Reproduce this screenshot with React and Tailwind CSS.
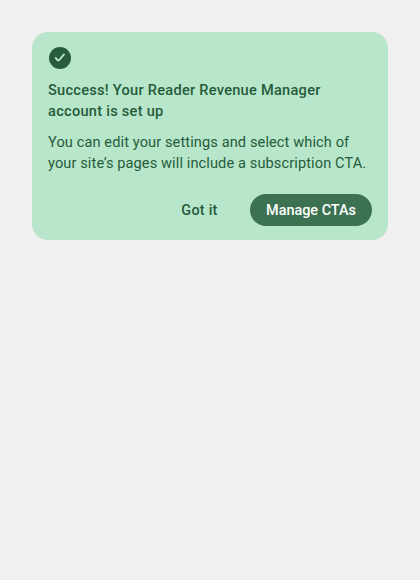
function SuccessIcon() {
  return (
    <svg className="block size-6" viewBox="0 0 24 24" fill="none" aria-hidden="true">
      <circle cx="12" cy="12" r="11" fill="#265c3b" />
      <path d="M7.7 11.9L9.4 14.1Q10.3 15 11.1 14.1L16 8.4" stroke="#b8e6ca" strokeWidth="1.9" strokeLinecap="round" strokeLinejoin="round" />
    </svg>
  );
}

export default function App() {
  return (
    <main className="min-h-screen bg-[#f0f0f0] p-8 font-['Roboto',sans-serif] text-[#265c3b]">
      <section className="h-52 rounded-2xl bg-[#b8e6ca] px-4 pt-3.5">
        <SuccessIcon />
        <h1 className="mt-2.5 text-[14.6px] leading-[21px] font-medium tracking-[0.26px]">
          <span className="block whitespace-nowrap">Success! Your Reader Revenue Manager</span>
          <span className="block whitespace-nowrap">account is set up</span>
        </h1>
        <p className="mt-2.5 text-[14.6px] leading-[21px] tracking-[0.1px]">
          <span className="block whitespace-nowrap">You can edit your settings and select which of</span>
          <span className="block whitespace-nowrap">your site’s pages will include a subscription CTA.</span>
        </p>
        <div className="mt-5 flex justify-end gap-4 text-[14.4px] leading-5 font-medium">
          <button className="h-8 w-[69px] rounded-full pt-px tracking-[0.25px] whitespace-nowrap">Got it</button>
          <button className="h-8 w-[122px] rounded-full bg-[#3c7251] pt-px whitespace-nowrap text-white">Manage CTAs</button>
        </div>
      </section>
    </main>
  );
}
